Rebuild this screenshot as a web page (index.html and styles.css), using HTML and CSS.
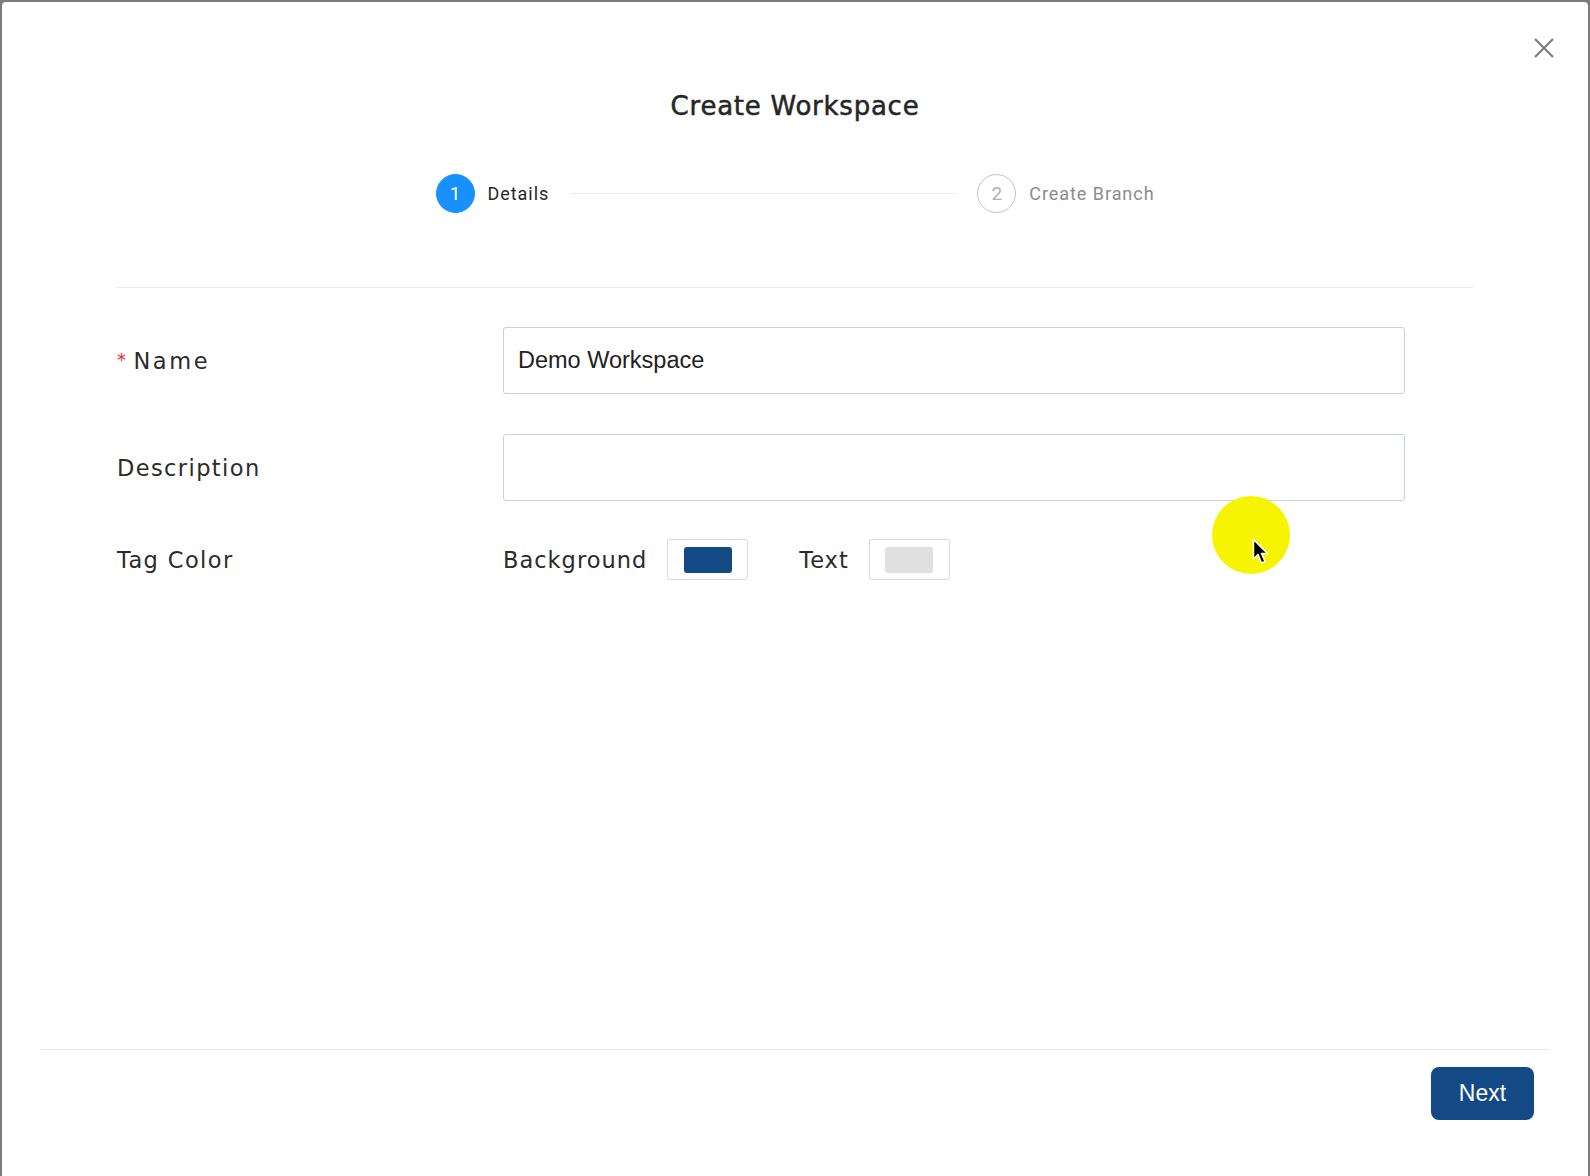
FILE: index.html
```html
<!DOCTYPE html>
<html>
<head>
<meta charset="utf-8">
<link rel="stylesheet" href="styles.css">
</head>
<body>
<div class="modal">
  <button class="close" aria-label="Close">
    <svg width="20" height="20" viewBox="0 0 20 20"><path d="M1 1 L19 19 M19 1 L1 19" stroke="#7a7a7a" stroke-width="2" fill="none"/></svg>
  </button>
  <div class="header">
    <h1 class="title">Create Workspace</h1>
    <div class="steps">
      <div class="step active"><span class="num">1</span><span class="step-label">Details</span></div>
      <div class="step-line"></div>
      <div class="step"><span class="num">2</span><span class="step-label">Create Branch</span></div>
    </div>
  </div>
  <div class="body">
    <div class="divider"></div>
    <div class="form">
      <div class="row">
        <label class="label"><span class="req">*</span><span class="wide">Name</span></label>
        <div class="input">Demo Workspace</div>
      </div>
      <div class="row">
        <label class="label">Description</label>
        <div class="input"></div>
      </div>
      <div class="row tag-row">
        <label class="label">Tag Color</label>
        <div class="tag-controls">
          <span class="sub-label">Background</span>
          <span class="swatch"><span class="swatch-fill dark"></span></span>
          <span class="sub-label text-label">Text</span>
          <span class="swatch"><span class="swatch-fill light"></span></span>
        </div>
      </div>
    </div>
  </div>
  <div class="footer">
    <button class="next">Next</button>
  </div>
  <div class="highlight"></div>
  <svg class="cursor" width="18" height="28" viewBox="0 0 18 28"><path d="M1.5 1.5 L1.5 21 L6 16.5 L9.5 25 L13 23.5 L9.5 15.5 L15.5 15.5 Z" fill="#000" stroke="#fff" stroke-width="1.5" stroke-linejoin="round"/></svg>
</div>
</body>
</html>
```
FILE: styles.css
```css
html, body {
  margin: 0;
  padding: 0;
}
body {
  background: #7c7c7c;
  width: 1590px;
  height: 1176px;
  overflow: hidden;
}
.modal {
  position: relative;
  margin: 2px 2px 0 2px;
  height: 1174px;
  background: #fff;
  border-radius: 4px 4px 0 0;
  display: flex;
  flex-direction: column;
}
.close {
  position: absolute;
  top: 36px;
  right: 34px;
  width: 20px;
  height: 20px;
  padding: 0;
  border: 0;
  background: none;
}
.close svg { display: block; }
.header {
  padding-top: 88px;
  display: flex;
  flex-direction: column;
  align-items: center;
}
.title {
  margin: 0;
  font-family: "DejaVu Sans", sans-serif;
  font-weight: normal;
  font-size: 26px;
  line-height: 32px;
  letter-spacing: 0.75px;
  color: #262626;
  -webkit-text-stroke: 0.5px #262626;
}
.steps {
  margin-top: 52px;
  display: flex;
  align-items: center;
  height: 39px;
  font-family: Roboto, sans-serif;
}
.step {
  display: flex;
  align-items: center;
}
.num {
  width: 37px;
  height: 37px;
  border-radius: 50%;
  border: 1.5px solid #c4c4c4;
  color: #b0b0b0;
  display: flex;
  align-items: center;
  justify-content: center;
  font-size: 19px;
}
.step.active .num {
  background: #1890ff;
  border-color: #1890ff;
  color: #fff;
}
.step-label {
  margin-left: 13px;
  font-size: 18px;
  letter-spacing: 0.95px;
  color: #8c8c8c;
}
.step.active .step-label {
  color: #262626;
}
.step-line {
  width: 386px;
  height: 1px;
  background: #ececec;
  margin: 0 21px;
}
.body {
  flex: 1;
  padding: 0 115px 0 114px;
}
.divider {
  margin-top: 74px;
  height: 1px;
  background: #ebebeb;
}
.form {
  padding-top: 39px;
  display: flex;
  flex-direction: column;
  gap: 40px;
}
.row {
  display: flex;
  align-items: center;
}
.tag-row {
  margin-top: -2px;
}
.label {
  width: 387px;
  flex: none;
  font-family: "DejaVu Sans", sans-serif;
  font-size: 22.5px;
  letter-spacing: 1.4px;
  color: #2b2b2b;
  padding-left: 1px;
  box-sizing: border-box;
}
.wide {
  letter-spacing: 2.6px;
}
.req {
  color: #f5222d;
  font-size: 18px;
  margin-right: 6px;
  position: relative;
  top: -3px;
}
.input {
  width: 902px;
  height: 67px;
  box-sizing: border-box;
  border: 1.5px solid #c9d1d9;
  border-radius: 3px;
  padding: 0 14px;
  display: flex;
  align-items: center;
  font-family: "Liberation Sans", Arial, sans-serif;
  font-size: 23.5px;
  color: #222;
}
.tag-controls {
  display: flex;
  align-items: center;
}
.sub-label {
  font-family: "DejaVu Sans", sans-serif;
  font-size: 22.5px;
  letter-spacing: 1px;
  color: #2b2b2b;
  margin-right: 20px;
}
.text-label {
  margin-left: 51px;
}
.swatch {
  width: 81px;
  height: 41px;
  box-sizing: border-box;
  border: 1.5px solid #d9d9d9;
  border-radius: 3px;
  display: flex;
  align-items: center;
  justify-content: center;
}
.swatch-fill {
  width: 48px;
  height: 26px;
  border-radius: 3px;
}
.swatch-fill.dark { background: #134a85; }
.swatch-fill.light { background: #e0e0e0; }
.footer {
  margin: 0 39px;
  border-top: 1.5px solid #e6e6e6;
  padding: 17px 15px 56px 0;
  display: flex;
  justify-content: flex-end;
}
.next {
  width: 103px;
  height: 53px;
  border: 0;
  border-radius: 8px;
  background: #134a85;
  color: #fff;
  font-family: "Liberation Sans", Arial, sans-serif;
  font-size: 23px;
  padding: 0;
}
.highlight {
  position: absolute;
  left: 1210px;
  top: 494px;
  width: 78px;
  height: 78px;
  border-radius: 50%;
  background: #f7f400;
  filter: blur(0.6px);
}
.cursor {
  position: absolute;
  left: 1250px;
  top: 536px;
}
```
